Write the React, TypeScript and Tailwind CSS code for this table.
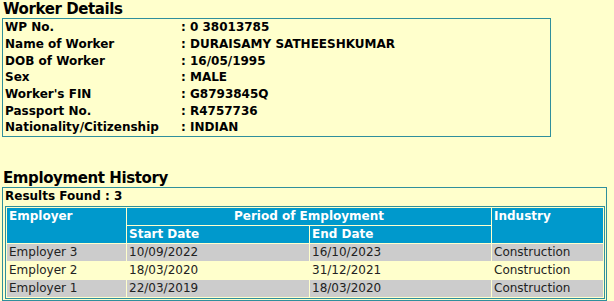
export default function App() {
  const worker = [
    ["WP No.", "0 38013785"],
    ["Name of Worker", "DURAISAMY SATHEESHKUMAR"],
    ["DOB of Worker", "16/05/1995"],
    ["Sex", "MALE"],
    ["Worker's FIN", "G8793845Q"],
    ["Passport No.", "R4757736"],
    ["Nationality/Citizenship", "INDIAN"],
  ]

  const history = [
    { employer: "Employer 3", start: "10/09/2022", end: "16/10/2023", industry: "Construction" },
    { employer: "Employer 2", start: "18/03/2020", end: "31/12/2021", industry: "Construction" },
    { employer: "Employer 1", start: "22/03/2019", end: "18/03/2020", industry: "Construction" },
  ]

  return (
    <div className="w-[614px] h-[301px] overflow-hidden bg-[#ffffcc] text-black font-['DejaVu_Sans',Verdana,sans-serif]">
      {/* Worker details */}
      <h2 className="pl-[3px] text-[15px] font-bold leading-[18px] h-[18px] tracking-[-0.4px]">Worker Details</h2>
      <div className="ml-[2px] w-[549px] border border-[#2f8f9c]">
        <table className="border-collapse">
          <tbody>
            {worker.map(([label, value]) => (
              <tr key={label} className="h-[16.7px] text-[12px] font-bold leading-[16px]">
                <td className="w-[178px] pl-[2px] p-0 whitespace-nowrap">{label}</td>
                <td className="p-0 whitespace-nowrap">: {value}</td>
              </tr>
            ))}
          </tbody>
        </table>
      </div>

      {/* Employment history */}
      <h2 className="mt-[32px] pl-[3px] text-[15px] font-bold leading-[18px] h-[18px] tracking-[-0.4px]">Employment History</h2>
      <div className="ml-[2px] w-[605px] border border-[#2f8f9c] pb-[1px]">
        <div className="pl-[2px] h-[18px] text-[12px] font-bold leading-[17px]">Results Found : 3</div>
        <table className="ml-[2px] w-[600px] border border-[#2f8f9c] border-separate border-spacing-[1px] text-[12px] leading-[17px]">
          <thead>
            <tr className="h-[17px] bg-[#0099cc] text-white font-bold">
              <th rowSpan={2} className="w-[119px] p-0 pl-[2px] text-left align-top">Employer</th>
              <th colSpan={2} className="p-0 text-center">Period of Employment</th>
              <th rowSpan={2} className="w-[111px] p-0 pl-[2px] text-left align-top">Industry</th>
            </tr>
            <tr className="h-[17px] bg-[#0099cc] text-white font-bold">
              <th className="w-[182px] p-0 pl-[2px] text-left">Start Date</th>
              <th className="w-[181px] p-0 pl-[2px] text-left">End Date</th>
            </tr>
          </thead>
          <tbody>
            {history.map((row, i) => (
              <tr key={row.employer} className={i % 2 === 0 ? "h-[17px] bg-[#cccccc]" : "h-[17px] bg-[#ffffcc]"}>
                <td className="p-0 pl-[2px] text-[#222]">{row.employer}</td>
                <td className="p-0 pl-[2px] text-[#222]">{row.start}</td>
                <td className="p-0 pl-[2px] text-[#222]">{row.end}</td>
                <td className="p-0 pl-[2px] text-[#222]">{row.industry}</td>
              </tr>
            ))}
          </tbody>
        </table>
      </div>
    </div>
  )
}
